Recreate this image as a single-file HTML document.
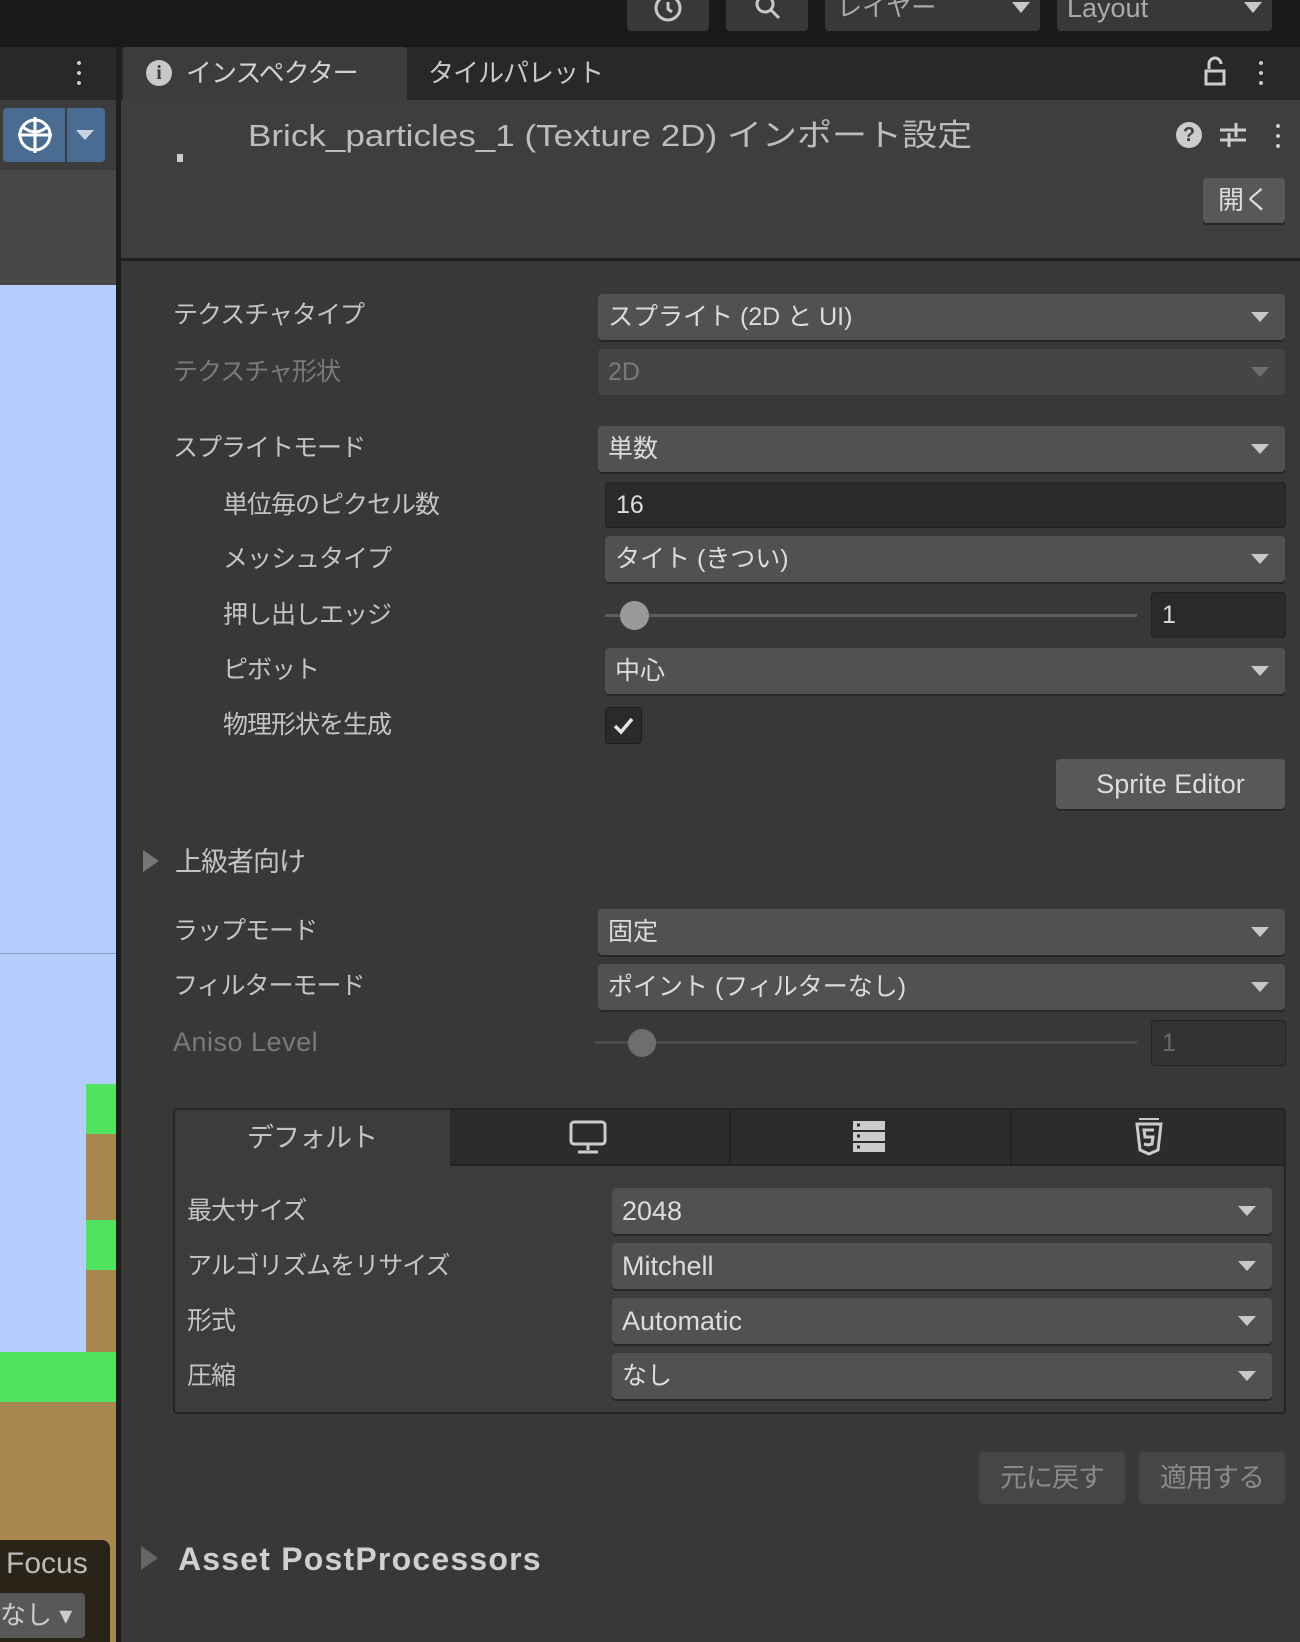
<!DOCTYPE html>
<html><head><meta charset="utf-8">
<style>
*{box-sizing:border-box;margin:0;padding:0}
body{width:1300px;height:1642px;overflow:hidden;background:#383838;font-family:"Liberation Sans","Noto Sans CJK JP",sans-serif;color:#c8c8c8;position:relative}
.a{position:absolute}
.lbl{position:absolute;font-size:25px;line-height:30px;color:#c4c4c4;white-space:nowrap;letter-spacing:-1px}
.dis{color:#7a7a7a}
.dd{position:absolute;background:#515151;border-radius:4px;height:46px;font-size:25px;line-height:46px;padding-left:10px;color:#dcdcdc;box-shadow:0 2px 0 #262626}
.dd::after{content:"";position:absolute;right:16px;top:18px;border-left:9px solid transparent;border-right:9px solid transparent;border-top:10px solid #c8c8c8}
.dd.d{background:#454545;color:#7a7a7a;box-shadow:none}
.dd.d::after{border-top-color:#6e6e6e}
.fld{position:absolute;background:#2a2a2a;border-radius:4px;border:1px solid #212121;font-size:25px;line-height:44px;padding-left:10px;color:#dcdcdc}
.btn{position:absolute;background:#585858;border-radius:4px;font-size:25px;text-align:center;color:#dedede;box-shadow:0 2px 0 #262626}
</style></head><body>
<!-- top bar -->
<div class="a" style="left:0;top:0;width:1300px;height:47px;background:#191919"></div>
<div class="a" style="left:627px;top:0;width:82px;height:31px;background:#383838;border-radius:0 0 4px 4px"></div>
<svg class="a" style="left:650px;top:0" width="36" height="26"><circle cx="18" cy="8" r="12" fill="none" stroke="#c8c8c8" stroke-width="3"/><path d="M18 2v7l4 3" stroke="#c8c8c8" stroke-width="3" fill="none"/></svg>
<div class="a" style="left:726px;top:0;width:82px;height:31px;background:#383838;border-radius:0 0 4px 4px"></div>
<svg class="a" style="left:750px;top:0" width="40" height="26"><circle cx="15" cy="4" r="8" fill="none" stroke="#c8c8c8" stroke-width="3"/><path d="M21 10l8 8" stroke="#c8c8c8" stroke-width="3"/></svg>
<div class="a" style="left:825px;top:0;width:215px;height:31px;background:#383838;border-radius:0 0 4px 4px;font-size:25px;line-height:16px;padding-left:12px;color:#aaa;overflow:hidden">レイヤー</div>
<div class="a" style="left:1012px;top:2px;border-left:9px solid transparent;border-right:9px solid transparent;border-top:11px solid #c8c8c8"></div>
<div class="a" style="left:1057px;top:0;width:215px;height:31px;background:#383838;border-radius:0 0 4px 4px;font-size:27px;line-height:16px;padding-left:10px;color:#aaa;overflow:hidden">Layout</div>
<div class="a" style="left:1244px;top:2px;border-left:9px solid transparent;border-right:9px solid transparent;border-top:11px solid #c8c8c8"></div>

<!-- left panel -->
<div class="a" style="left:0;top:47px;width:116px;height:53px;background:#282828"></div>
<div class="a" style="left:77px;top:58px;width:4px;height:30px;background:radial-gradient(circle,#ccc 1.8px,transparent 2.2px) 0 0/4px 10px"></div>
<div class="a" style="left:0;top:100px;width:116px;height:70px;background:#3c3c3c"></div>
<div class="a" style="left:3px;top:108px;width:62px;height:54px;background:#4a6c93;border-radius:4px 0 0 4px"></div>
<svg class="a" style="left:14px;top:113px" width="42" height="44"><circle cx="21" cy="22" r="15" fill="none" stroke="#fff" stroke-width="3"/><path d="M21 4v36M4 22h34M9 14q12 10 24 0" stroke="#fff" stroke-width="3" fill="none"/></svg>
<div class="a" style="left:67px;top:108px;width:38px;height:54px;background:#4a6c93;border-radius:0 4px 4px 0"></div>
<div class="a" style="left:76px;top:130px;border-left:9px solid transparent;border-right:9px solid transparent;border-top:10px solid #c8d4e4"></div>
<div class="a" style="left:0;top:170px;width:116px;height:115px;background:#474747"></div>
<div class="a" style="left:0;top:285px;width:116px;height:1357px;background:#b3cdfc"></div>
<div class="a" style="left:0;top:953px;width:116px;height:1px;background:#8a9bbb"></div>
<div class="a" style="left:86px;top:1084px;width:30px;height:268px;background:#a9864f"></div>
<div class="a" style="left:86px;top:1084px;width:30px;height:50px;background:#4fe35f"></div>
<div class="a" style="left:86px;top:1220px;width:30px;height:50px;background:#4fe35f"></div>
<div class="a" style="left:0;top:1352px;width:116px;height:290px;background:#a9864f"></div>
<div class="a" style="left:0;top:1352px;width:116px;height:50px;background:#4fe35f"></div>
<div class="a" style="left:0;top:1540px;width:110px;height:102px;background:#2a2418;border-radius:0 8px 0 0"></div>
<div class="a" style="left:6px;top:1546px;font-size:30px;color:#bbb;line-height:36px;white-space:nowrap">Focus</div>
<div class="a" style="left:0;top:1593px;width:85px;height:45px;background:#585858;border-radius:0 4px 4px 0;font-size:26px;line-height:45px;color:#ccc;white-space:nowrap;overflow:hidden">なし ▾</div>
<div class="a" style="left:116px;top:47px;width:5px;height:1595px;background:#1d1d1d"></div>

<!-- inspector tab bar -->
<div class="a" style="left:121px;top:47px;width:1179px;height:53px;background:#282828"></div>
<div class="a" style="left:123px;top:47px;width:284px;height:53px;background:#3c3c3c;border-radius:4px 4px 0 0"></div>
<div class="a" style="left:146px;top:60px;width:26px;height:26px;border-radius:50%;background:#c8c8c8;color:#3c3c3c;font-weight:bold;font-size:20px;text-align:center;line-height:26px;font-family:'Liberation Serif',serif">i</div>
<div class="a" style="left:186px;top:57px;font-size:26px;line-height:32px;color:#d2d2d2;letter-spacing:-1px">インスペクター</div>
<div class="a" style="left:428px;top:57px;font-size:26px;line-height:32px;color:#c8c8c8;letter-spacing:-1px">タイルパレット</div>
<svg class="a" style="left:1200px;top:55px" width="30" height="34"><path d="M9 14v-5a6 6 0 0 1 12 0" stroke="#ccc" stroke-width="3" fill="none"/><rect x="6" y="16" width="18" height="13" fill="none" stroke="#ccc" stroke-width="3"/></svg>
<div class="a" style="left:1259px;top:58px;width:4px;height:30px;background:radial-gradient(circle,#ccc 1.8px,transparent 2.2px) 0 0/4px 10px"></div>

<!-- header -->
<div class="a" style="left:121px;top:100px;width:1179px;height:160px;background:#3e3e3e"></div>
<div class="a" style="left:121px;top:258px;width:1179px;height:3px;background:#1f1f1f"></div>
<div class="a" style="left:177px;top:154px;width:6px;height:8px;background:#ccc"></div>
<div class="a" style="left:248px;top:116px;font-size:31px;line-height:40px;color:#bdbdbd;white-space:nowrap;transform:scaleX(1.13);transform-origin:left">Brick_particles_1 (Texture 2D) インポート設定</div>
<div class="a" style="left:1176px;top:122px;width:26px;height:26px;border-radius:50%;background:#ccc;color:#3e3e3e;font-weight:bold;font-size:20px;text-align:center;line-height:26px">?</div>
<svg class="a" style="left:1218px;top:120px" width="30" height="30"><path d="M2 10h26M2 20h26M18 3v14M11 13v14" stroke="#ccc" stroke-width="3"/></svg>
<div class="a" style="left:1276px;top:121px;width:4px;height:30px;background:radial-gradient(circle,#ccc 1.8px,transparent 2.2px) 0 0/4px 10px"></div>
<div class="btn" style="left:1203px;top:178px;width:82px;height:45px;line-height:45px;font-size:26px">開く</div>

<!-- body -->
<div class="lbl" style="left:173px;top:300px">テクスチャタイプ</div>
<div class="dd" style="left:598px;top:294px;width:687px">スプライト (2D と UI)</div>
<div class="lbl dis" style="left:173px;top:357px">テクスチャ形状</div>
<div class="dd d" style="left:598px;top:349px;width:687px">2D</div>

<div class="lbl" style="left:173px;top:433px">スプライトモード</div>
<div class="dd" style="left:598px;top:426px;width:687px">単数</div>
<div class="lbl" style="left:223px;top:490px">単位毎のピクセル数</div>
<div class="fld" style="left:605px;top:482px;width:681px;height:46px">16</div>
<div class="lbl" style="left:223px;top:544px">メッシュタイプ</div>
<div class="dd" style="left:605px;top:536px;width:680px">タイト (きつい)</div>
<div class="lbl" style="left:223px;top:600px">押し出しエッジ</div>
<div class="a" style="left:605px;top:614px;width:532px;height:3px;background:#5e5e5e"></div>
<div class="a" style="left:620px;top:601px;width:29px;height:29px;border-radius:50%;background:#999"></div>
<div class="fld" style="left:1151px;top:592px;width:135px;height:46px">1</div>
<div class="lbl" style="left:223px;top:655px">ピボット</div>
<div class="dd" style="left:605px;top:648px;width:680px">中心</div>
<div class="lbl" style="left:223px;top:710px">物理形状を生成</div>
<div class="a" style="left:605px;top:707px;width:37px;height:37px;background:#2a2a2a;border-radius:4px;border:1px solid #1e1e1e"></div>
<svg class="a" style="left:610px;top:712px" width="27" height="27"><path d="M5 14l6 6 11-13" stroke="#e6e6e6" stroke-width="3.5" fill="none"/></svg>
<div class="btn" style="left:1056px;top:759px;width:229px;height:50px;line-height:50px;font-size:27px">Sprite Editor</div>

<div class="a" style="left:143px;top:850px;border-top:11px solid transparent;border-bottom:11px solid transparent;border-left:16px solid #777"></div>
<div class="lbl" style="left:175px;top:847px;font-size:27px">上級者向け</div>

<div class="lbl" style="left:173px;top:916px">ラップモード</div>
<div class="dd" style="left:598px;top:909px;width:687px">固定</div>
<div class="lbl" style="left:173px;top:971px">フィルターモード</div>
<div class="dd" style="left:598px;top:964px;width:687px">ポイント (フィルターなし)</div>
<div class="lbl dis" style="left:173px;top:1027px;font-size:27px;letter-spacing:0.5px">Aniso Level</div>
<div class="a" style="left:595px;top:1041px;width:542px;height:3px;background:#4c4c4c"></div>
<div class="a" style="left:628px;top:1029px;width:28px;height:28px;border-radius:50%;background:#6e6e6e"></div>
<div class="fld" style="left:1151px;top:1020px;width:135px;height:46px;background:#333;color:#6a6a6a">1</div>

<!-- platform box -->
<div class="a" style="left:173px;top:1108px;width:1113px;height:306px;background:#3c3c3c;border:2px solid #252525;border-radius:4px"></div>
<div class="a" style="left:450px;top:1110px;width:834px;height:56px;background:#2c2c2c;border-bottom:2px solid #232323"></div>
<div class="a" style="left:729px;top:1110px;width:2px;height:56px;background:#222"></div>
<div class="a" style="left:1010px;top:1110px;width:2px;height:56px;background:#222"></div>
<div class="lbl" style="left:247px;top:1123px;font-size:27px">デフォルト</div>
<svg class="a" style="left:568px;top:1120px" width="40" height="36"><rect x="3" y="2" width="34" height="22" rx="3" fill="none" stroke="#ccc" stroke-width="3"/><path d="M20 24v6M10 32h20" stroke="#ccc" stroke-width="3"/></svg>
<svg class="a" style="left:852px;top:1120px" width="34" height="34"><rect x="1" y="1" width="32" height="9" fill="#ccc"/><rect x="1" y="12" width="32" height="9" fill="#ccc"/><rect x="1" y="23" width="32" height="9" fill="#ccc"/><path d="M5 5h3M5 16h3M5 27h3" stroke="#2c2c2c" stroke-width="3"/></svg>
<svg class="a" style="left:1134px;top:1117px" width="30" height="40"><path d="M3 7h24l-3 26-9 4-9-4z" fill="none" stroke="#ccc" stroke-width="3"/><path d="M20 13h-10l1 7h8l-1 7-4 1-4-1" fill="none" stroke="#ccc" stroke-width="3"/><path d="M5 2h20" stroke="#ccc" stroke-width="2"/></svg>
<div class="lbl" style="left:187px;top:1196px">最大サイズ</div>
<div class="dd" style="left:612px;top:1188px;width:660px;font-size:27px">2048</div>
<div class="lbl" style="left:187px;top:1251px">アルゴリズムをリサイズ</div>
<div class="dd" style="left:612px;top:1243px;width:660px;font-size:27px">Mitchell</div>
<div class="lbl" style="left:187px;top:1306px">形式</div>
<div class="dd" style="left:612px;top:1298px;width:660px;font-size:27px">Automatic</div>
<div class="lbl" style="left:187px;top:1361px">圧縮</div>
<div class="dd" style="left:612px;top:1353px;width:660px">なし</div>

<div class="btn" style="left:979px;top:1452px;width:146px;height:52px;line-height:52px;background:#464646;color:#8a8a8a;font-size:27px;box-shadow:none;letter-spacing:-1px">元に戻す</div>
<div class="btn" style="left:1139px;top:1452px;width:146px;height:52px;line-height:52px;background:#464646;color:#8a8a8a;font-size:27px;box-shadow:none;letter-spacing:-1px">適用する</div>

<div class="a" style="left:141px;top:1546px;border-top:12px solid transparent;border-bottom:12px solid transparent;border-left:17px solid #666"></div>
<div class="lbl" style="left:178px;top:1540px;font-size:32px;line-height:38px;font-weight:bold;color:#cfcfcf;letter-spacing:1.2px">Asset PostProcessors</div>
</body></html>
